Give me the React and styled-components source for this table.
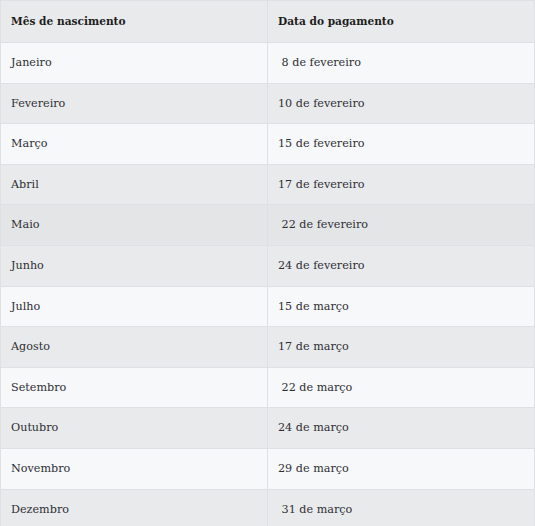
import React from 'react'
import styled, { createGlobalStyle } from 'styled-components'

const GlobalStyle = createGlobalStyle`
  body {
    margin: 0;
    background: #ffffff;
  }
`;

const Table = styled.table`
  width: 535px;
  border-collapse: collapse;
  font-family: "DejaVu Serif", serif;
  font-size: 11px;
  color: #2e2f34;
`;

const HeadCell = styled.th`
  text-align: left;
  font-weight: bold;
  font-size: 10.6px;
  color: #1c1d20;
  background: #e9eaec;
  border: 1px solid #dfe0e3;
  padding: 10px 10px 10px 10px;
  line-height: 21px;
  width: 50%;
`;

const Row = styled.tr`
  background: ${(p) => p.$bg};
`;

const Cell = styled.td`
  border: 1px solid #dfe0e3;
  padding: 10px 10px;
  line-height: 19.6px;
  white-space: pre;
  font-size: 11.2px;
`;

const LIGHT = '#f7f8fa'
const GREY = '#e9eaec'
const DARK = '#e4e5e7'

const rows = [
  ['Janeiro', ' 8 de fevereiro', LIGHT],
  ['Fevereiro', '10 de fevereiro', GREY],
  ['Março', '15 de fevereiro', LIGHT],
  ['Abril', '17 de fevereiro', GREY],
  ['Maio', ' 22 de fevereiro', DARK],
  ['Junho', '24 de fevereiro', GREY],
  ['Julho', '15 de março', LIGHT],
  ['Agosto', '17 de março', GREY],
  ['Setembro', ' 22 de março', LIGHT],
  ['Outubro', '24 de março', GREY],
  ['Novembro', '29 de março', LIGHT],
  ['Dezembro', ' 31 de março', GREY],
]

export default function App () {
  return (
    <>
      <GlobalStyle />
      <Table>
        <thead>
          <tr>
            <HeadCell>Mês de nascimento</HeadCell>
            <HeadCell>Data do pagamento</HeadCell>
          </tr>
        </thead>
        <tbody>
          {rows.map(([month, date, bg]) => (
            <Row key={month} $bg={bg}>
              <Cell>{month}</Cell>
              <Cell>{date}</Cell>
            </Row>
          ))}
        </tbody>
      </Table>
    </>
  )
}
